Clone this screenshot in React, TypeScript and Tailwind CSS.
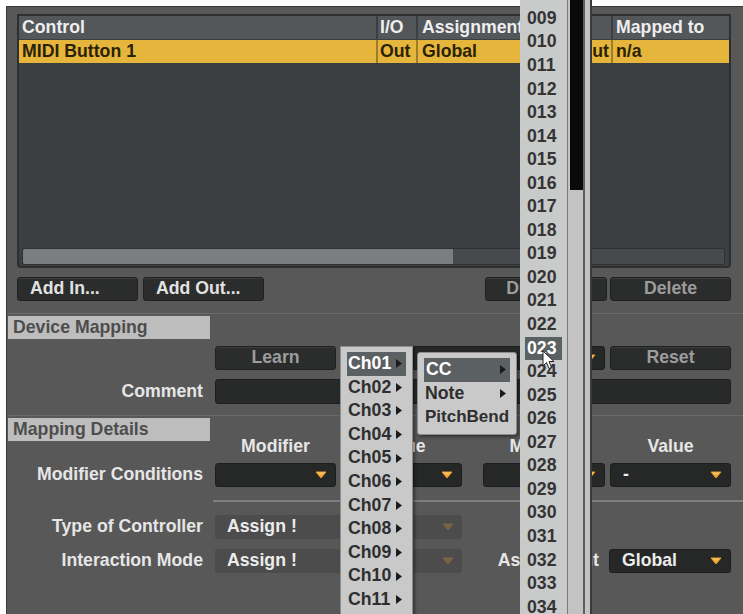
import React from "react";

const FONT = "font-['Liberation_Sans',Arial,Helvetica,sans-serif]";

function DownArrow({ dim = false }: { dim?: boolean }) {
  return (
    <svg width="12" height="8" viewBox="0 0 12 8" className="shrink-0">
      <defs>
        <linearGradient id="og" x1="0" y1="0" x2="0" y2="1">
          <stop offset="0" stopColor="#ffd27a" />
          <stop offset="1" stopColor="#e88a12" />
        </linearGradient>
      </defs>
      <path
        d="M1 1 H11 L6 7 Z"
        fill={dim ? "#7a6444" : "url(#og)"}
        stroke={dim ? "#7a6444" : "#e99a2a"}
        strokeWidth="1"
        strokeLinejoin="round"
      />
    </svg>
  );
}

function SideArrow() {
  return (
    <svg width="6" height="9" viewBox="0 0 6 9" className="shrink-0">
      <path d="M0 0 L6 4.5 L0 9 Z" fill="#1c1c1c" />
    </svg>
  );
}

function Btn({ label, dim = false, center = false, className = "" }: { label: string; dim?: boolean; center?: boolean; className?: string }) {
  return (
    <div
      className={`flex h-[24px] items-center rounded-[3px] border border-[#1f2020] bg-[#2b2c2c] shadow-[inset_0_1px_0_#3a3b3b] ${
        center ? "justify-center" : "pl-[12px]"
      } ${dim ? "text-[#9c9c9c]" : "text-[#e2e2e2]"} ${className}`}
    >
      {label}
    </div>
  );
}

function Drop({ text = "", dim = false, className = "" }: { text?: string; dim?: boolean; className?: string }) {
  return (
    <div
      className={`flex h-[24px] items-center justify-between rounded-[3px] pl-[12px] pr-[8px] ${
        dim ? "bg-[#4c4c4c]" : "border border-[#1c1d1d] bg-[#262727]"
      } text-[#ececec] ${className}`}
    >
      <span>{text}</span>
      <DownArrow dim={dim} />
    </div>
  );
}

const channels = ["Ch01", "Ch02", "Ch03", "Ch04", "Ch05", "Ch06", "Ch07", "Ch08", "Ch09", "Ch10", "Ch11", "Ch12"];
const numbers = Array.from({ length: 26 }, (_, i) => String(i + 9).padStart(3, "0"));

export default function App() {
  return (
    <div className={`relative h-[614px] w-[743px] overflow-hidden bg-white ${FONT} text-[17.7px] font-bold leading-none`}>
      <div className="ml-[6px] mt-[6px] h-[608px] border-l border-t border-[#3a3a3a] bg-[#585858] pt-[7px]">
        {/* control list */}
        <div className="ml-[10px] flex h-[254px] w-[714px] flex-col rounded-b-[4px] border-2 border-[#2d2f30] bg-[#3c3f41]">
          <div className="flex h-[23px] items-center bg-[#54575a] text-[#eeeeee]">
            <div className="flex h-full w-[359px] items-center border-r-2 border-[#3c3f41] pl-[3px]">Control</div>
            <div className="flex h-full w-[40px] items-center border-r-2 border-[#3c3f41] pl-[2px]">I/O</div>
            <div className="flex h-full w-[112px] items-center overflow-hidden whitespace-nowrap border-r-2 border-[#3c3f41] pl-[4px]">Assignment</div>
            <div className="flex h-full w-[83px] items-center border-r-2 border-[#3c3f41] pl-[4px]">Mode</div>
            <div className="flex h-full flex-1 items-center pl-[3px]">Mapped to</div>
          </div>
          <div className="mt-[1px] flex h-[23px] items-center bg-[#e6b63c] text-[#2a2206]">
            <div className="flex h-full w-[359px] items-center border-r-2 border-[#9c7d2c] pl-[3px]">MIDI Button 1</div>
            <div className="flex h-full w-[40px] items-center border-r-2 border-[#9c7d2c] pl-[2px]">Out</div>
            <div className="flex h-full w-[112px] items-center border-r-2 border-[#9c7d2c] pl-[4px]">Global</div>
            <div className="flex h-full w-[83px] items-center justify-end border-r-2 border-[#9c7d2c] pr-[2px]">Output</div>
            <div className="flex h-full flex-1 items-center pl-[3px]">n/a</div>
          </div>
          <div className="flex-1" />
          <div className="mb-[1px] ml-[3px] mr-[4px] flex h-[17px] rounded-[2px] border border-[#2f3133] bg-[#474a4c]">
            <div className="h-full w-[430px] rounded-l-[2px] bg-[#7b7e80]" />
          </div>
        </div>

        {/* list buttons */}
        <div className="ml-[10px] mt-[9px] flex w-[714px] items-center">
          <Btn label="Add In..." className="w-[121px]" />
          <Btn label="Add Out..." className="ml-[5px] w-[121px]" />
          <div className="flex-1" />
          <Btn label="Duplicate" dim center className="w-[122px]" />
          <Btn label="Delete" dim center className="ml-[3px] w-[121px]" />
        </div>

        {/* device mapping */}
        <div className="mt-[12px] h-[1px] bg-[#6a6a6a]" />
        <div className="mt-[2px] flex items-start">
          <div className="ml-[1px] flex h-[23px] w-[202px] items-center bg-[#bdbdbd] pl-[5px] text-[#4d4d4d]">Device Mapping</div>
        </div>

        <div className="mt-[7px] flex w-[724px] items-center">
          <div className="w-[208px]" />
          <Btn label="Learn" dim center className="w-[121px]" />
          <Drop className="ml-[7px] w-[262px]" />
          <Btn label="Reset" dim center className="ml-[5px] w-[121px]" />
        </div>

        <div className="mt-[9px] flex w-[724px] items-center">
          <div className="w-[208px] pr-[12px] text-right text-[#e6e6e6]">Comment</div>
          <div className="h-[25px] flex-1 rounded-[3px] border border-[#1c1d1d] bg-[#282929]" />
        </div>

        {/* mapping details */}
        <div className="mt-[11px] h-[1px] bg-[#6a6a6a]" />
        <div className="mt-[2px] flex items-start text-[#e6e6e6]">
          <div className="ml-[1px] flex h-[23px] w-[202px] items-center bg-[#bdbdbd] pl-[5px] text-[#4d4d4d]">Mapping Details</div>
          <div className="ml-[5px] flex pt-[20px]">
            <div className="w-[121px] text-center">Modifier</div>
            <div className="ml-[7px] w-[119px] text-center">Value</div>
            <div className="ml-[21px] w-[122px] text-center">Modifier</div>
            <div className="ml-[5px] w-[121px] text-center">Value</div>
          </div>
        </div>

        <div className="mt-[7px] flex w-[724px] items-center">
          <div className="w-[208px] whitespace-nowrap pr-[12px] text-right text-[#e6e6e6]">Modifier Conditions</div>
          <Drop className="w-[121px]" />
          <Drop className="ml-[7px] w-[119px]" />
          <Drop className="ml-[21px] w-[122px]" />
          <Drop text="-" className="ml-[5px] w-[121px]" />
        </div>

        <div className="ml-[206px] mt-[13px] h-[2px] bg-[#7e7e7e]" />

        <div className="mt-[13px] flex w-[724px] items-center">
          <div className="w-[208px] pr-[12px] text-right text-[#e6e6e6]">Type of Controller</div>
          <Drop text="Assign !" dim className="w-[247px]" />
        </div>

        <div className="mt-[10px] flex w-[724px] items-center">
          <div className="w-[208px] pr-[12px] text-right text-[#e6e6e6]">Interaction Mode</div>
          <Drop text="Assign !" dim className="w-[247px]" />
          <div className="flex-1 pr-[10px] text-right text-[#e6e6e6]">Assignment</div>
          <Drop text="Global" className="w-[122px]" />
        </div>
      </div>

      {/* channel menu */}
      <div className="absolute left-[340px] top-[346px] h-[280px] w-[73px] border border-[#8d8d8d] bg-[#c9c9c9] px-[6px] pt-[5px] text-[#2e2e2e] shadow-[2px_2px_3px_rgba(0,0,0,0.4)]">
        {channels.map((c, i) => (
          <div
            key={c}
            className={`flex h-[23.6px] items-center justify-between pl-[1px] pr-[4px] ${i === 0 ? "bg-[#5b6062] text-white" : ""}`}
          >
            <span>{c}</span>
            <SideArrow />
          </div>
        ))}
      </div>

      {/* message type submenu */}
      <div className="absolute left-[417px] top-[352px] h-[83px] w-[100px] rounded-[3px] border border-[#8d8d8d] bg-[#c9c9c9] px-[6px] pt-[5px] text-[#2e2e2e] shadow-[2px_2px_3px_rgba(0,0,0,0.4)]">
        <div className="flex h-[23.6px] items-center justify-between bg-[#5b6062] pl-[2px] pr-[4px] text-white">
          <span>CC</span>
          <SideArrow />
        </div>
        <div className="flex h-[23.6px] items-center justify-between pl-[1px] pr-[4px]">
          <span>Note</span>
          <SideArrow />
        </div>
        <div className="flex h-[23.6px] items-center pl-[1px] text-[17px]">PitchBend</div>
      </div>

      {/* number list */}
      <div className="absolute left-[520px] top-0 h-[614px] w-[48px] border-r border-[#7a7a7a] bg-[#c9caca] px-[5px] pt-[7px] text-[#343434]">
        {numbers.map((n) => (
          <div key={n} className={`flex h-[23.56px] items-center pl-[2px] ${n === "023" ? "bg-[#5a6163] text-white" : ""}`}>
            {n}
          </div>
        ))}
      </div>
      <div className="absolute left-[568px] top-0 flex h-[614px] w-[24px] border-r-2 border-[#3a3a3a] bg-[#c3c3c3]">
        <div className="w-[17px] border-r-2 border-[#5e5e5e] pl-[2px]">
          <div className="h-[190px] w-[13px] bg-[#0a0a0a]" />
        </div>
      </div>

      {/* mouse pointer */}
      <svg className="absolute left-[542px] top-[350px]" width="14" height="21" viewBox="0 0 14 21">
        <path d="M1 1 L1 16 L4.5 12.5 L7 18.5 L9.5 17.5 L7 11.5 L12 11.5 Z" fill="#ffffff" stroke="#222" strokeWidth="1" strokeLinejoin="round" />
      </svg>
    </div>
  );
}
